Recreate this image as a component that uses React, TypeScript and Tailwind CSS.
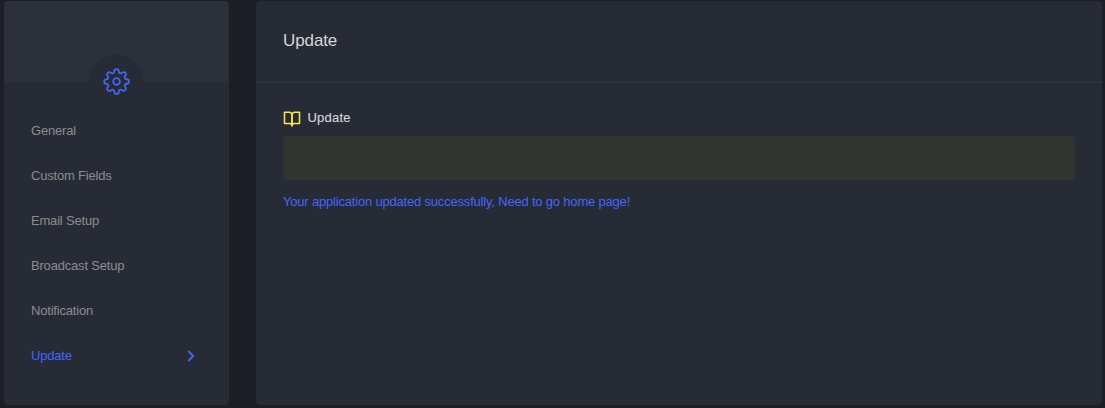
import React from 'react';
import { FiBookOpen, FiChevronRight, FiSettings } from 'react-icons/fi';

const tabs = ['General', 'Custom Fields', 'Email Setup', 'Broadcast Setup', 'Notification', 'Update'];

export default function App() {
  const active = 'Update';
  return (
    <div className="flex h-[408px] w-[1105px] gap-[27px] overflow-hidden bg-[#1c1f26] pt-px pr-[3px] pb-[3px] pl-1 font-['Liberation_Sans',Arial,sans-serif] text-[13px] tracking-[-0.19px] text-[#8d8d8d]">
      <aside className="flex w-[225px] shrink-0 flex-col rounded-[4px] bg-[#272b35]">
        <div className="flex h-[81px] shrink-0 justify-center rounded-t-[4px] bg-[#2c303b] pt-[54px] pr-px">
          <div className="flex size-[54px] shrink-0 items-center justify-center rounded-full bg-[#272b35] pb-px">
            <FiSettings className="size-[27px] text-[#4466f2]" style={{ strokeWidth: 1.6 }} />
          </div>
        </div>
        <nav className="flex flex-col pt-[26px] pr-[29px] pl-[27px]">
          {tabs.map((tab) => (
            <a
              key={tab}
              className={`flex h-[45px] items-center justify-between ${tab === active ? 'text-[#4466ff]' : ''}`}
            >
              {tab}
              {tab === active && (
                <FiChevronRight className="size-[18px] text-[#4466f2]" style={{ strokeWidth: 2.5 }} />
              )}
            </a>
          ))}
        </nav>
      </aside>
      <main className="min-w-0 flex-1 rounded-[4px] bg-[#272b35]">
        <header className="flex h-[82px] items-center border-b border-[#323641] px-[27px] pb-[2px]">
          <h1 className="text-[17px] tracking-[-0.1px] text-[#d6d6d6]">Update</h1>
        </header>
        <section className="px-[27px] pt-[25px]">
          <div className="flex h-5 items-center gap-[6.5px] text-[#d8d8d8]">
            <FiBookOpen className="mt-px size-[18px] text-[#fce944]" />
            <span className="tracking-[0.2px] [-webkit-text-stroke:0.12px_currentColor]">Update</span>
          </div>
          <div className="mt-2 h-11 rounded-[4px] bg-[#323432]" />
          <p className="mt-3 leading-5 text-[#4466ff]">
            Your application updated successfully, Need to go home page!
          </p>
        </section>
      </main>
    </div>
  );
}
